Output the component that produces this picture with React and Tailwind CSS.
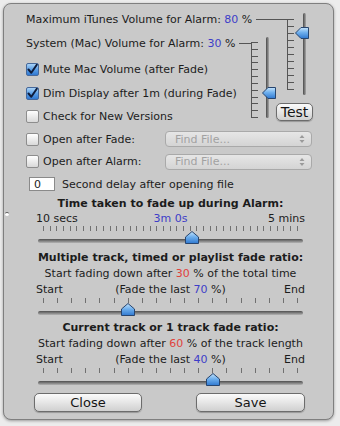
import React from 'react';

const BLUE = 'text-[#3d3dc8]';
const RED = 'text-[#e0423c]';

// Casilla estilo Aqua
function Checkbox({ checked }) {
  if (checked) {
    return (
      <div className="w-[13px] h-[13px] rounded-[2px] border border-[#46689a] bg-gradient-to-b from-[#a9d3f7] via-[#5b9fe6] to-[#2f78d2] flex items-center justify-center">
        <svg width="11" height="11" viewBox="0 0 11 11">
          <path d="M1.5 5.5 L4.3 8.8 L9.8 0.8" fill="none" stroke="#0f1c3a" strokeWidth="2" strokeLinecap="round" strokeLinejoin="round" />
        </svg>
      </div>
    );
  }
  return <div className="w-[13px] h-[13px] rounded-[2px] border border-[#8d8d8d] bg-gradient-to-b from-[#ffffff] to-[#d9d9d9]" />;
}

function CheckRow({ checked, label, className = '' }) {
  return (
    <div className={`flex items-center ${className}`}>
      <Checkbox checked={checked} />
      <span className="ml-[4px] whitespace-nowrap">{label}</span>
    </div>
  );
}

// Flecha del slider (apunta arriba o a la izquierda)
function Thumb({ dir }) {
  const d = dir === 'up'
    ? 'M7 0.5 L13.5 6 L13.5 12.5 L0.5 12.5 L0.5 6 Z'
    : 'M0.5 6 L6 0.5 L13.5 0.5 L13.5 11.5 L6 11.5 Z';
  return (
    <svg width="14" height="13" viewBox="0 0 14 13">
      <defs>
        <linearGradient id={`g-${dir}`} x1="0" y1="0" x2="0" y2="1">
          <stop offset="0" stopColor="#c6e4fb" />
          <stop offset="0.45" stopColor="#6fb0ee" />
          <stop offset="1" stopColor="#2f78d0" />
        </linearGradient>
      </defs>
      <path d={d} fill={`url(#g-${dir})`} stroke="#27456f" strokeWidth="1" strokeLinejoin="round" />
    </svg>
  );
}

function HSlider({ ticks, pct }) {
  return (
    <div className="relative h-[22px] ml-[2px] w-[265px]">
      <div className="absolute left-[5px] right-[5px] top-[1px] flex justify-between">
        {Array.from({ length: ticks }).map((_, i) => (
          <div key={i} className="w-px h-[5px] bg-[#707070]" />
        ))}
      </div>
      <div className="absolute left-0 right-0 top-[14px] h-[4px] rounded-full bg-gradient-to-b from-[#4f4f4f] to-[#b4b4b4]" />
      <div className="absolute top-[6px]" style={{ left: `${5 + pct * 2.55 - 7}px` }}>
        <Thumb dir="up" />
      </div>
    </div>
  );
}

function Ruler({ ticks, height }) {
  return (
    <div className="flex flex-col justify-between border-l border-[#555]" style={{ height }}>
      {Array.from({ length: ticks }).map((_, i) => (
        <div key={i} className="w-[6px] h-px bg-[#555]" />
      ))}
    </div>
  );
}

function PopUp() {
  return (
    <div className="w-[147px] h-[16px] rounded-[4px] border border-[#a9a9a9] bg-gradient-to-b from-[#e6e6e6] to-[#d4d4d4] flex items-center justify-between pl-[9px] pr-[6px]">
      <span className="text-[#a2a2a2] text-[11px]">Find File...</span>
      <svg width="6" height="10" viewBox="0 0 6 10">
        <path d="M0.5 4 L3 1 L5.5 4 Z M0.5 6 L3 9 L5.5 6 Z" fill="#9a9a9a" />
      </svg>
    </div>
  );
}

function AquaButton({ children, className = '' }) {
  return (
    <button className={`rounded-[5px] border border-[#6c6c6c] bg-gradient-to-b from-[#fbfbfb] via-[#e6e6e6] to-[#d0d0d0] text-[#151515] shadow-[0_1px_1px_rgba(0,0,0,0.25)] ${className}`}>
      {children}
    </button>
  );
}

export default function App() {
  return (
    <div className="w-[340px] h-[426px] bg-[#ececec] pt-[3px] pl-[3px] font-['DejaVu_Sans','Liberation_Sans',sans-serif] text-[11px] text-[#1c1c1c] leading-none">
      <div className="relative w-[331px] h-[417px] rounded-[8px] border border-[#7f7f7f] bg-[#c9c9c9] shadow-[0_1px_3px_rgba(0,0,0,0.35)]">
        {/* puntito del borde */}
        <div className="absolute left-[1px] top-[208px] w-[4px] h-[4px] rounded-full bg-white border-t border-[#555]" />

        {/* Parte superior con los volumenes */}
        <div className="grid grid-cols-[225px_23px_39px] ml-[22px] mt-[3px]">
          <div className="col-span-2 h-[24px] flex items-center">
            <span className="whitespace-nowrap">Maximum iTunes Volume for Alarm: <span className={BLUE}>80</span> %</span>
            <div className="flex-1 ml-[4px] h-px bg-[#555]" />
          </div>

          {/* Slider 1 + Test */}
          <div className="row-span-2 flex flex-col">
            <div className="relative h-[96px]">
              <div className="absolute left-0 top-[12px] w-[13px] h-px bg-[#555]" />
              <div className="absolute left-[13px] top-[12px]">
                <Ruler ticks={11} height={71} />
              </div>
              <div className="absolute left-[29px] top-[6px] w-[3px] h-[82px] rounded-full bg-gradient-to-r from-[#4a4a4a] to-[#a8a8a8]" />
              <div className="absolute left-[21px] top-[20px]">
                <Thumb dir="left" />
              </div>
            </div>
            <AquaButton className="ml-[2px] w-[37px] h-[18px] text-[14px] leading-none rounded-[4px] border-[#4d4d4d]">Test</AquaButton>
          </div>

          <div className="flex flex-col">
            <div className="h-[24px] flex items-center">
              <span className="whitespace-nowrap">System (Mac) Volume for Alarm: <span className={BLUE}>30</span> %</span>
              <div className="flex-1 ml-[4px] h-px bg-[#555]" />
            </div>
            <CheckRow checked label="Mute Mac Volume (after Fade)" className="h-[24px] mt-[2px]" />
            <CheckRow checked label="Dim Display after 1m (during Fade)" className="h-[24px]" />
            <CheckRow label="Check for New Versions" className="h-[23px]" />
          </div>

          {/* Slider 2 */}
          <div className="relative">
            <div className="absolute left-0 top-[11px]">
              <Ruler ticks={12} height={76} />
            </div>
            <div className="absolute left-[15px] top-[6px] w-[3px] h-[81px] rounded-full bg-gradient-to-r from-[#4a4a4a] to-[#a8a8a8]" />
            <div className="absolute left-[11px] top-[56px]">
              <Thumb dir="left" />
            </div>
          </div>
        </div>

        {/* Abrir archivos */}
        <div className="ml-[22px]">
          <div className="h-[22px] flex items-center">
            <CheckRow label="Open after Fade:" className="w-[139px]" />
            <PopUp />
          </div>
          <div className="h-[23px] flex items-center">
            <CheckRow label="Open after Alarm:" className="w-[139px]" />
            <PopUp />
          </div>
          <div className="h-[22px] flex items-center">
            <div className="ml-[3px] w-[26px] h-[14px] bg-white border border-[#8a8a8a] flex items-center pl-[4px]">0</div>
            <span className="ml-[7px]">Second delay after opening file</span>
          </div>
        </div>

        {/* Sliders de tiempo y fade */}
        <div className="ml-[32px] w-[269px] flex flex-col">
          <div className="h-[16px] flex items-center justify-center font-bold">Time taken to fade up during Alarm:</div>
          <div className="h-[14px] grid grid-cols-3 items-center">
            <span>10 secs</span>
            <span className={`text-center ${BLUE}`}>3m 0s</span>
            <span className="text-right">5 mins</span>
          </div>
          <HSlider ticks={39} pct={58.6} />

          <div className="mt-[2px] h-[16px] flex items-center justify-center font-bold whitespace-nowrap">Multiple track, timed or playlist fade ratio:</div>
          <div className="h-[16px] flex items-center justify-center whitespace-nowrap">
            Start fading down after&nbsp;<span className={RED}>30</span>&nbsp;% of the total time
          </div>
          <div className="h-[16px] grid grid-cols-[1fr_auto_1fr] items-center">
            <span>Start</span>
            <span className="text-center">(Fade the last <span className={BLUE}>70</span> %)</span>
            <span className="text-right">End</span>
          </div>
          <HSlider ticks={19} pct={33.3} />

          <div className="h-[16px] flex items-center justify-center font-bold">Current track or 1 track fade ratio:</div>
          <div className="h-[16px] flex items-center justify-center whitespace-nowrap">
            Start fading down after&nbsp;<span className={RED}>60</span>&nbsp;% of the track length
          </div>
          <div className="h-[16px] grid grid-cols-[1fr_auto_1fr] items-center">
            <span>Start</span>
            <span className="text-center">(Fade the last <span className={BLUE}>40</span> %)</span>
            <span className="text-right">End</span>
          </div>
          <HSlider ticks={19} pct={66.7} />
        </div>

        {/* Botones */}
        <div className="mt-[4px] ml-[30px] flex gap-[54px]">
          <AquaButton className="w-[108px] h-[19px] text-[13px]">Close</AquaButton>
          <AquaButton className="w-[109px] h-[19px] text-[13px]">Save</AquaButton>
        </div>
      </div>
    </div>
  );
}
